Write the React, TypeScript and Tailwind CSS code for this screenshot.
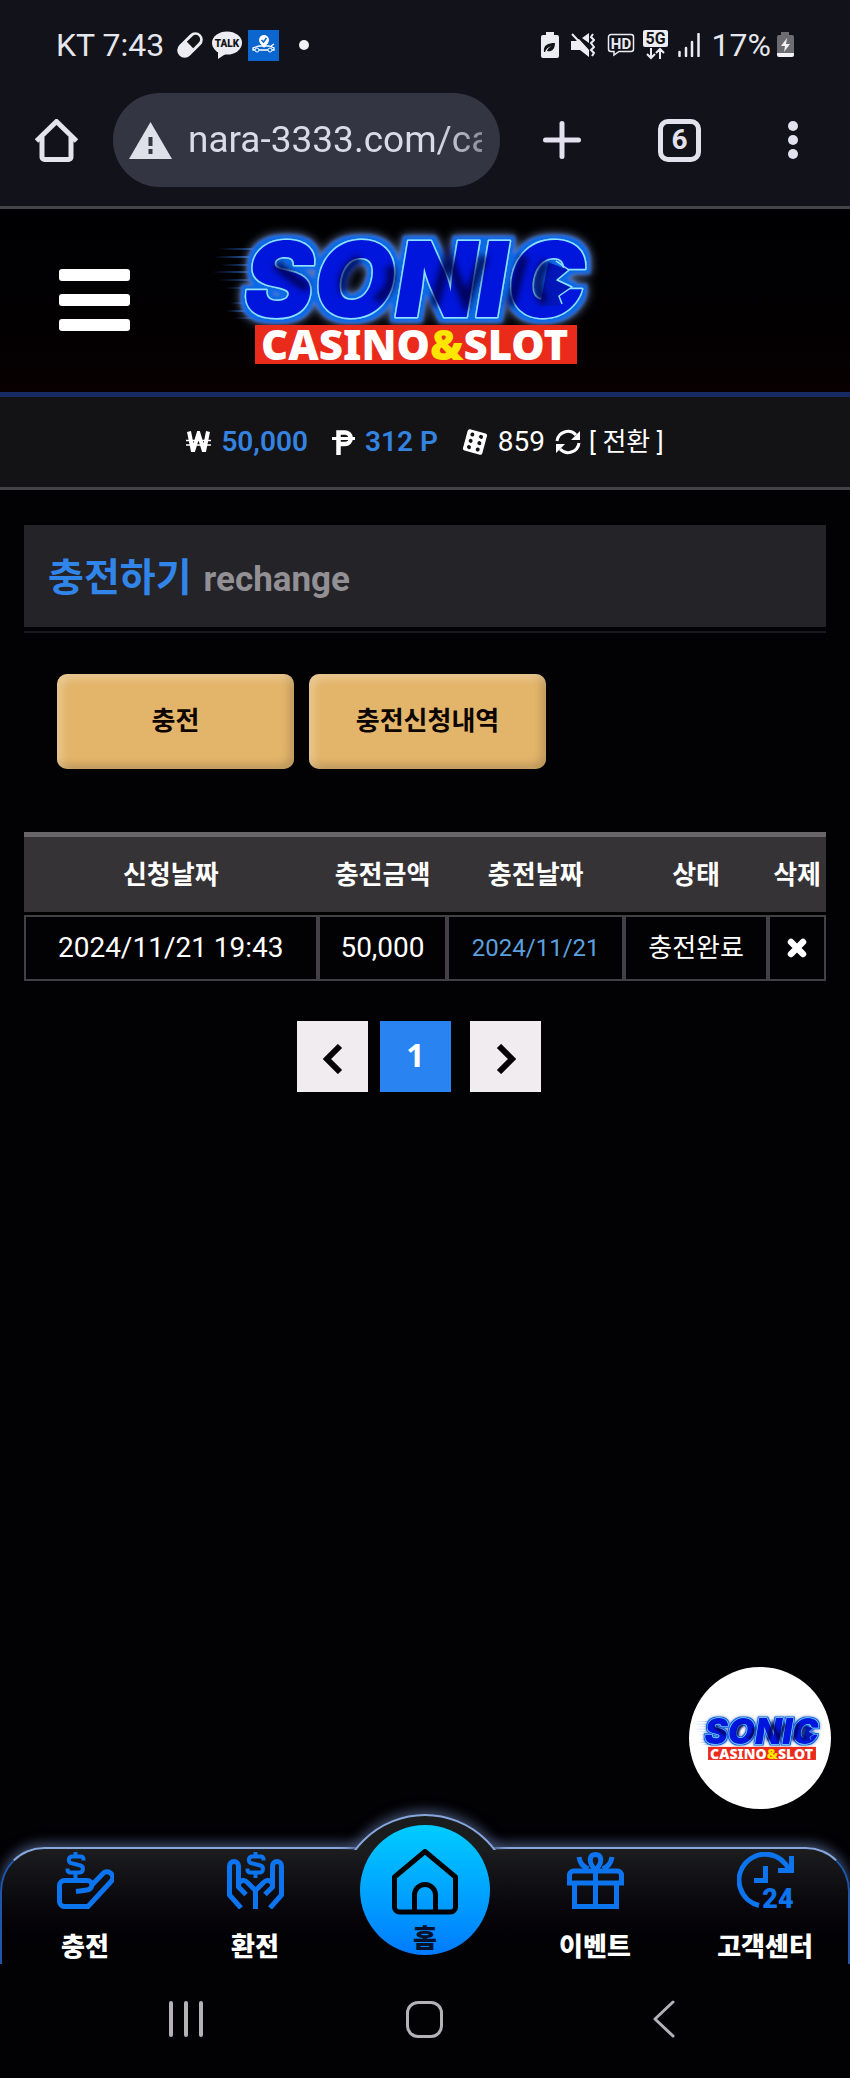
import { ReactNode } from 'react';

const records = [
  { requested: '2024/11/21 19:43', amount: '50,000', charged: '2024/11/21', status: '충전완료' },
];

const columns = [
  { title: '신청날짜', width: 'w-[36.6%]' },
  { title: '충전금액', width: 'w-[16.2%]' },
  { title: '충전날짜', width: 'w-[22%]' },
  { title: '상태', width: 'w-[18%]' },
  { title: '삭제', width: 'w-[7.2%]' },
];

function SonicLogo({ className }: { className: string }) {
  return (
    <svg viewBox="0 0 400 140" className={className} role="img" aria-label="SONIC CASINO&SLOT">
      <defs>
        {/* blue rim plus a wide pale halo around the letters */}
        <filter id="logo-glow" x="-10%" y="-30%" width="120%" height="160%">
          <feMorphology in="SourceAlpha" operator="dilate" radius="4" result="wide" />
          <feGaussianBlur in="wide" stdDeviation="5" result="haloShape" />
          <feFlood floodColor="#6f8dbd" />
          <feComposite in2="haloShape" operator="in" result="halo" />
          <feMorphology in="SourceAlpha" operator="dilate" radius="4" />
          <feGaussianBlur stdDeviation="1.5" result="rimShape" />
          <feFlood floodColor="#0a6ae6" />
          <feComposite in2="rimShape" operator="in" result="rim" />
          <feMerge>
            <feMergeNode in="halo" />
            <feMergeNode in="rim" />
            <feMergeNode in="SourceGraphic" />
          </feMerge>
        </filter>
        <filter id="logo-shade" x="-10%" y="-30%" width="120%" height="160%">
          <feGaussianBlur stdDeviation="3" />
        </filter>
        <linearGradient id="logo-speed" x1="0" x2="1">
          <stop offset="0" stopColor="#2b6fe0" stopOpacity="0" />
          <stop offset="1" stopColor="#3c8cff" />
        </linearGradient>
      </defs>
      <g fill="url(#logo-speed)">
        <rect x="8" y="18" width="60" height="2" />
        <rect x="4" y="26" width="50" height="2" />
        <rect x="10" y="34" width="50" height="2" />
        <rect x="2" y="41" width="60" height="2" />
        <rect x="8" y="49" width="60" height="2" />
        <rect x="14" y="57" width="50" height="2" />
        <rect x="20" y="72" width="30" height="2" />
        <rect x="16" y="80" width="30" height="2" />
        <rect x="24" y="87" width="40" height="2" />
      </g>
      <g filter="url(#logo-glow)">
        <text
          x="34"
          y="87"
          fill="#0018dc"
          stroke="#8ae4ff"
          strokeWidth="3"
          strokeLinejoin="round"
          paintOrder="stroke"
          fontFamily="Inter, sans-serif"
          fontWeight="900"
          fontStyle="italic"
          fontSize="105"
        >
          SONIC
        </text>
        <path d="M338 32L359 40 347 50 362 57 349 66V76H330z" fill="#0014b8" />
        <path d="M346 31L359 40 347 50 362 57 349 66 352 74" fill="none" stroke="#8ae4ff" strokeWidth="1.500" strokeLinejoin="round" />
      </g>
      <g stroke="#00064a" strokeWidth="9" fill="none" filter="url(#logo-shade)" opacity="0.85">
        <path d="M66 34Q78 46 98 58M224 76L238 26 256 72 274 26M300 76L314 26M334 72Q322 54 336 32" />
        <path d="M134 62Q130 40 150 29M180 36Q186 58 166 70" />
      </g>
      <rect x="45" y="95" width="322" height="39" fill="#ea2a1b" />
      <text x="51" y="130" fill="#fff" fontFamily="'Noto Sans', sans-serif" fontWeight="900" fontSize="42">
        CASINO<tspan fill="#ffe600">&amp;</tspan>SLOT
      </text>
    </svg>
  );
}

function StatusBar() {
  return (
    <div className="flex h-[68px] items-center justify-between px-14 pt-[22px] text-[#e6e6ee]">
      <div className="flex items-center">
        <span className="text-[32px] leading-10">KT 7:43</span>
        <svg viewBox="0 0 28 28" className="ml-3 size-7">
          <g transform="rotate(-45 14 14)">
            <rect x="-1" y="6.500" width="30" height="15" rx="7.500" fill="#ececf2" />
            <path d="M14 9.500h8a4.500 4.500 0 0 1 0 9h-8z" fill="#131418" />
          </g>
        </svg>
        <svg viewBox="0 0 30 28" className="ml-2 h-7 w-[30px]">
          <ellipse cx="15" cy="12" rx="15" ry="11.500" fill="#ececf2" />
          <path d="M6 20v8l9-6z" fill="#ececf2" />
          <text x="15" y="16" textAnchor="middle" fontFamily="Roboto, sans-serif" fontWeight="900" fontSize="10" fill="#131418">TALK</text>
        </svg>
        <svg viewBox="0 0 31 31" className="ml-1.5 size-[31px]">
          <rect width="31" height="31" fill="#0b66d0" />
          <circle cx="16" cy="10" r="5" fill="#fff" />
          <path d="M12 13l4 5 4-5z" fill="#fff" />
          <path d="M13.500 10l2 2 3-4" fill="none" stroke="#0b66d0" strokeWidth="1.500" />
          <path d="M7 20H5v-2l6-2h10l5 2v2h-2M11 20h9M23 16l3-2" fill="none" stroke="#fff" strokeWidth="1.300" />
          <circle cx="9" cy="20" r="2" fill="none" stroke="#fff" />
          <circle cx="22" cy="20" r="2" fill="none" stroke="#fff" />
        </svg>
        <span className="ml-5 size-2.5 rounded-full bg-[#f2f2f6]" />
      </div>

      <div className="flex items-center">
        <svg viewBox="0 0 18 26" className="h-[26px] w-[18px]">
          <path d="M5 0h8v3h3a2 2 0 0 1 2 2v19a2 2 0 0 1-2 2H2a2 2 0 0 1-2-2V5a2 2 0 0 1 2-2h3z" fill="#ececf2" />
          <path d="M3 20c-1-7 4-9 11-9 0 7-4 9-8 8 1-3 3-4 5-5-4 1-6 3-7 6z" fill="#131418" />
        </svg>
        <svg viewBox="0 0 24 24" className="ml-3 size-6">
          <path d="M0 8h5l3-2L18 17v7l-9-7H0zM11 5l7-5v10z" fill="#ececf2" />
          <path d="M1 1l16 17M22 1l-2 3 3 3-3 3 3 4-3 3 3 3-2 3" fill="none" stroke="#ececf2" strokeWidth="2" />
        </svg>
        <svg viewBox="0 0 28 24" className="ml-3 h-6 w-7">
          <path d="M4 1.500h20a2.500 2.500 0 0 1 2.500 2.500v12a2.500 2.500 0 0 1-2.500 2.500H12L7 22v-3.500H4A2.500 2.500 0 0 1 1.500 16V4A2.500 2.500 0 0 1 4 1.500z" fill="none" stroke="#ececf2" strokeWidth="1.500" />
          <text x="14" y="15.500" textAnchor="middle" fontFamily="Roboto, sans-serif" fontWeight="700" fontSize="15" fill="#ececf2">HD</text>
        </svg>
        <svg viewBox="0 0 25 30" className="ml-2 h-[30px] w-[25px]">
          <rect width="25" height="17" rx="2" fill="#ececf2" />
          <text x="12.500" y="14" textAnchor="middle" fontFamily="Roboto, sans-serif" fontWeight="700" fontSize="16" fill="#131418">5G</text>
          <path d="M8 18v10M4 24l4 4 4-4M17 29V19M13 23l4-4 4 4" fill="none" stroke="#ececf2" strokeWidth="2" />
        </svg>
        <svg viewBox="0 0 22 24" className="ml-2.5 h-6 w-[22px]">
          <path d="M1.500 19v4M8 15v8M14 9v14M20.500 1v22" stroke="#ececf2" strokeWidth="2.500" strokeLinecap="round" />
        </svg>
        <span className="ml-3 text-[32px] leading-10">17%</span>
        <svg viewBox="0 0 17 26" className="ml-1.5 h-[26px] w-[17px]">
          <path d="M4 0h8v3h3a2 2 0 0 1 2 2v17H0V5a2 2 0 0 1 2-2h2z" fill="#6c6c72" />
          <path d="M0 21h17v2a2 2 0 0 1-2 2H2a2 2 0 0 1-2-2z" fill="#f2f2f6" />
          <path d="M10 6l-6 8h4l-1 6 6-8H9z" fill="#f2f2f6" />
        </svg>
      </div>
    </div>
  );
}

function AddressBar() {
  return (
    <div className="flex items-center pt-[25px] pr-[52px] pb-[19px] pl-[35px]">
      <button type="button" aria-label="Home">
        <svg viewBox="0 0 43 43" className="size-[43px]" fill="none" stroke="#e4e4ec" strokeWidth="5" strokeLinejoin="round">
          <path d="M1.500 22L21.500 2.500l20 19.500" />
          <path d="M7 18v20a2.500 2.500 0 0 0 2.500 2.500h24A2.500 2.500 0 0 0 36 38V18" />
        </svg>
      </button>
      <label className="ml-[35px] flex h-[94px] min-w-0 flex-1 items-center rounded-full bg-[#333642] pl-4 pr-[18px]">
        <svg viewBox="0 0 43 37" className="h-[37px] w-[43px] shrink-0">
          <path d="M21.500 0L43 37H0z" fill="#dfe1ea" />
          <path d="M19.500 15h4v9h-4zM19.500 27h4v5h-4z" fill="#333642" />
        </svg>
        <input
          readOnly
          aria-label="Address"
          value="nara-3333.com/ca"
          className="ml-4 min-w-0 flex-1 bg-transparent text-[37px] leading-[48px] text-[#d9dbe8] outline-none [mask-image:linear-gradient(to_right,#000_85%,#0008)]"
        />
      </label>
      <button type="button" aria-label="New tab" className="ml-[43px]">
        <svg viewBox="0 0 38 38" className="size-[38px]" stroke="#e4e1ee" strokeWidth="5" strokeLinecap="round">
          <path d="M19 2.500v33M2.500 19h33" />
        </svg>
      </button>
      <button type="button" className="ml-[77px] flex size-[43px] items-center justify-center rounded-[10px] border-[5px] border-[#e4e1ee] text-[28px] font-bold leading-none text-[#e4e1ee]">
        6
      </button>
      <button type="button" aria-label="Menu" className="ml-[87px] flex flex-col gap-1">
        <span className="size-2.5 rounded-full bg-[#e4e1ee]" />
        <span className="size-2.5 rounded-full bg-[#e4e1ee]" />
        <span className="size-2.5 rounded-full bg-[#e4e1ee]" />
      </button>
    </div>
  );
}

function Balance() {
  return (
    <div className="flex h-[93px] items-center justify-center gap-6 border-b-[3px] border-[#434246] bg-[#131215] text-[28px] leading-8 text-white">
      <div className="flex items-center gap-2.5">
        <svg viewBox="0 0 25 23" className="h-[23px] w-[25px]" stroke="#fff" fill="none">
          <path d="M3 0.500l4 20 5.500-18 5.500 18 4-20" strokeWidth="4" />
          <path d="M0 9.500h25M0 14h25" strokeWidth="1.500" />
        </svg>
        <span className="font-semibold text-[#3583e0]">50,000</span>
      </div>
      <div className="flex items-center gap-2.5">
        <svg viewBox="0 0 23 25" className="h-[25px] w-[23px]" stroke="#fff" fill="none">
          <path d="M6.500 25V2.500H13a5.500 5.500 0 0 1 0 11.500H7" strokeWidth="4.500" />
          <path d="M0 8.500h23" strokeWidth="3" />
        </svg>
        <span className="font-semibold text-[#3583e0]">312 P</span>
      </div>
      <div className="flex items-center gap-2.5">
        <svg viewBox="0 0 26 26" className="size-[26px]">
          <g transform="rotate(15 13 13)">
            <rect x="3" y="2" width="20" height="22" rx="2" fill="#fff" />
            <g fill="#131215">
              <circle cx="8.500" cy="6.500" r="2" />
              <circle cx="17.500" cy="6.500" r="2" />
              <circle cx="8.500" cy="13" r="2" />
              <circle cx="17.500" cy="13" r="2" />
              <circle cx="8.500" cy="19.500" r="2" />
              <circle cx="17.500" cy="19.500" r="2" />
            </g>
          </g>
        </svg>
        <span>859</span>
        <button type="button" className="flex items-center gap-2">
          <svg viewBox="0 0 26 26" className="size-[26px]" fill="none" stroke="#fff" strokeWidth="3">
            <path d="M2 12A11 11 0 0 1 21 6" />
            <path d="M24 14A11 11 0 0 1 5 20" />
            <path d="M25 2v9h-9zM1 24v-9h9z" fill="#fff" stroke="none" />
          </svg>
          <span className="text-[26px]">[ 전환 ]</span>
        </button>
      </div>
    </div>
  );
}

const dollar = (x: number) => (
  <path
    transform={`translate(${x} 0)`}
    strokeWidth="4"
    d="M17.500 8.500V7a2.500 2.500 0 0 0-2.500-2.500H5.500A3.600 3.600 0 0 0 4.500 11L14.500 13.500A3.600 3.600 0 0 1 13.500 20.500H4A2.500 2.500 0 0 1 1.500 18V16.500M9.500 0v4M9.500 20v6"
  />
);

function DepositIcon() {
  return (
    <>
      {dollar(9)}
      <path d="M34 34L46 21.500a5.500 5.500 0 0 1 8 8L31 54.500H7.500a5 5 0 0 1-5-5V33.500a5 5 0 0 1 5-5H30c7 0 6 9 0 9.500L19 39.500" />
    </>
  );
}

function WithdrawIcon() {
  return (
    <>
      {dollar(19)}
      <path d="M14 56L2.500 43V14a4.500 4.500 0 0 1 9 0v21l7.500 7.500M12 31c4-4 6-3 9 0l7.500 7.500V57" />
      <path d="M43 56l11.500-13V14a4.500 4.500 0 0 0-9 0v21L38 42.500M45 31c-4-4-6-3-9 0l-7.500 7.500" />
    </>
  );
}

function EventIcon() {
  return (
    <>
      <path d="M2.500 31V23a4 4 0 0 1 4-4h44a4 4 0 0 1 4 4v8zM7.500 31v23.500h42V31M28.500 19v35" />
      <path d="M28.500 18c-8-8-6-15.500 0-15.500s8 7.500 0 15.500M12 5c1 7 4 9 9 12M45 5c-1 7-4 9-9 12" />
    </>
  );
}

function SupportIcon() {
  return (
    <>
      <path d="M22 53.500A26 26 0 1 1 52 18M54.500 4v14.500H41M28.500 14v14.500H17" />
      <text x="41" y="56" textAnchor="middle" fontFamily="Roboto, sans-serif" fontWeight="900" fontSize="27" fill="#0d74f0" stroke="none">24</text>
    </>
  );
}

function NavItem({ label, children }: { label: string; children: ReactNode }) {
  return (
    <a href="#" className="flex flex-1 flex-col items-center pt-[5px]">
      <svg viewBox="0 0 57 57" className="size-[57px]" fill="none" stroke="#0d74f0" strokeWidth="5">
        {children}
      </svg>
      <span className="mt-[22px] text-[26px] font-black leading-8 text-white">{label}</span>
    </a>
  );
}

function BottomNav() {
  return (
    <nav className="relative h-[117px]">
      <div className="absolute inset-0 rounded-t-[44px] border-2 border-b-0 border-x-[#1f56a8] border-t-[#86a6dc] bg-linear-to-b from-[#1c1d1f] to-[#020104] to-80% shadow-[0_-4px_12px_#3c4a68] [clip-path:inset(-30px_0_0_0)]" />
      {/* raised arc behind the home button */}
      <div className="absolute -top-[63px] left-1/2 h-[66px] w-[200px] -translate-x-1/2 overflow-hidden">
        <div className="mx-auto mt-[30px] size-[176px] rounded-full border-2 border-[#86a6dc] bg-[#1b1c1e] shadow-[0_-4px_12px_#3c4a68]" />
      </div>
      <div className="relative flex">
        <NavItem label="충전"><DepositIcon /></NavItem>
        <NavItem label="환전"><WithdrawIcon /></NavItem>
        <div className="flex flex-1 justify-center">
          <a href="#" className="-mt-[22px] flex size-[130px] flex-col items-center rounded-full bg-linear-to-b from-[#00ccff] to-[#007aff] pt-6">
            <svg viewBox="0 0 66 66" className="size-[66px] shrink-0" fill="none" stroke="#020104" strokeWidth="5" strokeLinejoin="round">
              <path d="M2.500 28L33 2.500 63.500 28v30a5 5 0 0 1-5 5h-51a5 5 0 0 1-5-5z" />
              <path d="M22.500 63V46a10.500 10.500 0 0 1 21 0v17" />
            </svg>
            <span className="mt-2 text-[26px] font-black leading-8 text-[#06122b]">홈</span>
          </a>
        </div>
        <NavItem label="이벤트"><EventIcon /></NavItem>
        <NavItem label="고객센터"><SupportIcon /></NavItem>
      </div>
    </nav>
  );
}

function SystemNav() {
  return (
    <div className="grid h-[114px] grid-cols-3 place-items-center px-[67px] pb-1">
      <button type="button" aria-label="Recent apps" className="flex gap-[11px]">
        <span className="h-9 w-1 rounded-full bg-[#b4b2b6]" />
        <span className="h-9 w-1 rounded-full bg-[#b4b2b6]" />
        <span className="h-9 w-1 rounded-full bg-[#b4b2b6]" />
      </button>
      <button type="button" aria-label="Home screen" className="size-[37px] rounded-xl border-[3px] border-[#b4b2b6]" />
      <button type="button" aria-label="Back">
        <svg viewBox="0 0 22 38" className="h-[38px] w-[22px]" fill="none" stroke="#b4b2b6" strokeWidth="3" strokeLinecap="round" strokeLinejoin="round">
          <path d="M20 2L2 19l18 17" />
        </svg>
      </button>
    </div>
  );
}

export default function App() {
  return (
    <div className="flex min-h-screen flex-col bg-[#020104] font-['Roboto','Noto_Sans_CJK_KR',sans-serif]">
      <div className="border-b-[3px] border-[#434348] bg-[#12131a]">
        <StatusBar />
        <AddressBar />
      </div>

      <header className="relative flex h-[188px] items-start justify-center border-b-[5px] border-[#182a63] bg-linear-to-b from-[#000002] to-[#080001]">
        <button type="button" aria-label="메뉴" className="absolute left-[59px] top-[60px] flex flex-col gap-[13px]">
          <span className="h-3 w-[71px] rounded-[3px] bg-white" />
          <span className="h-3 w-[71px] rounded-[3px] bg-white" />
          <span className="h-3 w-[71px] rounded-[3px] bg-white" />
        </button>
        <a href="#" className="mr-[30px] mt-[21px]">
          <SonicLogo className="h-[140px] w-[400px] overflow-visible" />
        </a>
      </header>
      <Balance />

      <main className="relative flex-1 px-6 pt-[35px]">
        <h1 className="flex h-[102px] items-center gap-3 bg-[#242327] px-6 pt-1 font-bold leading-[52px]">
          <span className="text-[39px] text-[#3184e8]">충전하기</span>
          <span className="pt-1 text-[35px] text-[#929095]">rechange</span>
        </h1>
        <hr className="mt-1 border-t-2 border-[#1a191d]" />

        <div className="ml-[33px] mt-[41px] flex gap-[15px]">
          {['충전', '충전신청내역'].map((label) => (
            <button
              key={label}
              type="button"
              className="h-[95px] w-[237px] rounded-[10px] bg-[#e3b56b] text-[26px] font-bold text-[#0c0502] shadow-[inset_4px_4px_8px_#ffffff50,inset_-4px_-4px_8px_#00000030]"
            >
              {label}
            </button>
          ))}
        </div>

        <table className="mt-[63px] w-full table-fixed border-separate border-spacing-0 text-center text-white">
          <thead>
            <tr>
              {columns.map(({ title, width }) => (
                <th key={title} className={`${width} h-[83px] whitespace-nowrap border-b-[3px] border-t-[5px] border-b-black border-t-[#69666a] bg-[#363336] p-0 text-[26px] font-bold leading-8`}>
                  {title}
                </th>
              ))}
            </tr>
          </thead>
          <tbody>
            {records.map((row) => (
              <tr key={row.requested} className="text-[28px] leading-8 *:h-[66px] *:border-2 *:border-[#444146]">
                <td>{row.requested}</td>
                <td>{row.amount}</td>
                <td className="text-[24px] text-[#5ba0dc]">{row.charged}</td>
                <td className="text-[26px]">{row.status}</td>
                <td>
                  <button type="button" aria-label="삭제" className="mx-auto block">
                    <svg viewBox="0 0 20 20" className="size-5" stroke="#fff" strokeWidth="6.500" strokeLinecap="round">
                      <path d="M4 4l12 12M16 4L4 16" />
                    </svg>
                  </button>
                </td>
              </tr>
            ))}
          </tbody>
        </table>

        <div className="mt-10 flex justify-center gap-3 pr-3">
          <button type="button" aria-label="이전" className="flex size-[71px] items-center justify-center bg-[#f0ecf0] pt-1">
            <svg viewBox="0 0 20 30" className="h-[30px] w-5" fill="none" stroke="#050305" strokeWidth="6">
              <path d="M17 2L4 15l13 13" />
            </svg>
          </button>
          <button type="button" className="mr-[7px] size-[71px] bg-[#2983f1] pb-1 font-['Noto_Sans'] text-[32px] font-bold leading-none text-white">
            1
          </button>
          <button type="button" aria-label="다음" className="flex size-[71px] items-center justify-center bg-[#f0ecf0] pt-1">
            <svg viewBox="0 0 20 30" className="h-[30px] w-5" fill="none" stroke="#050305" strokeWidth="6">
              <path d="M3 2l13 13L3 28" />
            </svg>
          </button>
        </div>

        <a href="#" className="absolute bottom-[38px] right-[19px] flex size-[142px] items-center justify-center rounded-full bg-white">
          <SonicLogo className="h-[47px] w-[134px] overflow-visible" />
        </a>
      </main>

      <BottomNav />
      <SystemNav />
    </div>
  );
}
